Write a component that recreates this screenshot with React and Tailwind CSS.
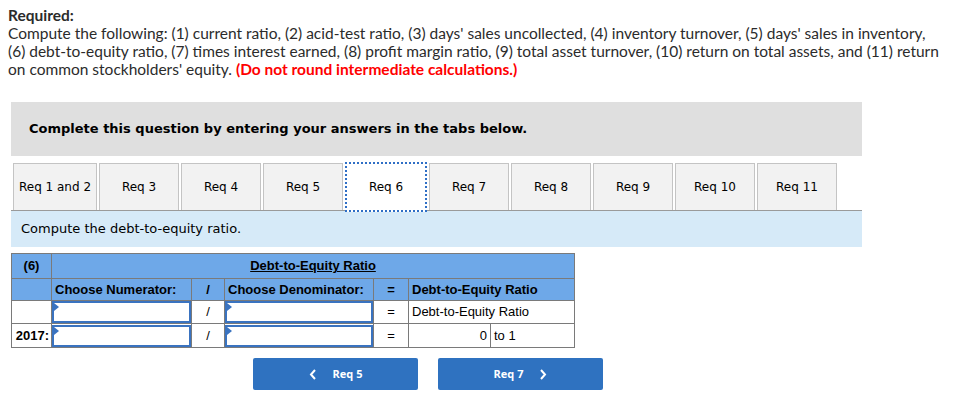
import React from 'react';

const tabs = ['Req 1 and 2', 'Req 3', 'Req 4', 'Req 5', 'Req 6', 'Req 7', 'Req 8', 'Req 9', 'Req 10', 'Req 11'];

const AnswerBox = () => (
    <div className="relative h-[22px] border-2 border-[#3a73c0] bg-white">
        <span className="absolute left-0 top-0 w-0 h-0 border-t-[4px] border-b-[4px] border-l-[5px] border-t-transparent border-b-transparent border-l-[#3a73c0]" />
    </div>
);

const App = () => {
    return (
        <div className="w-[957px] h-[412px] bg-white overflow-hidden">
            {/* Question text */}
            <div className="pl-2 pt-[6px] text-[15.5px] leading-[18px] text-[#2b2b2b] whitespace-nowrap" style={{ fontFamily: 'Lato, sans-serif' }}>
                <div className="font-bold">Required:</div>
                <div>Compute the following: (1) current ratio, (2) acid-test ratio, (3) days' sales uncollected, (4) inventory turnover, (5) days' sales in inventory,</div>
                <div>(6) debt-to-equity ratio, (7) times interest earned, (8) profit margin ratio, (9) total asset turnover, (10) return on total assets, and (11) return</div>
                <div>on common stockholders' equity. <span className="font-bold text-[#f00]">(Do not round intermediate calculations.)</span></div>
            </div>

            <div className="ml-[11px] w-[851px]" style={{ fontFamily: '"DejaVu Sans", Verdana, sans-serif' }}>
                <div className="mt-[24px] h-[54px] bg-[#dfdfdf] flex items-center pl-[18px] text-[13px] font-bold text-black">
                    Complete this question by entering your answers in the tabs below.
                </div>

                {/* Tabs */}
                <div className="mt-[7px] flex items-end gap-[2px] pl-[2px] border-b border-[#9a9a9a] h-[48px]">
                    {tabs.map((t, i) =>
                        i === 4 ? (
                            <div key={t} className="w-[82px] h-[50px] -mb-[2px] border-2 border-dotted border-[#2f6fc6] bg-white flex items-center justify-center text-[12px] text-black relative z-10">
                                {t}
                            </div>
                        ) : (
                            <div key={t} className={`${i === 0 ? 'w-[84px]' : 'w-[80px]'} h-[47px] border border-b-0 border-[#c4c4c4] bg-[#f2f2f2] flex items-center justify-center text-[12px] text-black`}>
                                {t}
                            </div>
                        )
                    )}
                </div>

                <div className="h-[36px] bg-[#d6eaf8] flex items-center pl-[10px] text-[13px] text-black">
                    Compute the debt-to-equity ratio.
                </div>

                {/* Ratio table */}
                <table className="mt-[6px] border-collapse text-[13px] text-black" style={{ fontFamily: '"Liberation Sans", Arial, sans-serif' }}>
                    <tbody>
                        <tr className="h-[25px] bg-[#6ea8e8]">
                            <td className="w-[40px] border border-[#7a7a7a] text-center font-bold">(6)</td>
                            <td colSpan={6} className="border border-[#7a7a7a] text-center font-bold underline">Debt-to-Equity Ratio</td>
                        </tr>
                        <tr className="h-[22px] bg-[#6ea8e8] font-bold">
                            <td className="border border-[#7a7a7a]"></td>
                            <td className="w-[140px] border border-[#7a7a7a] pl-[3px]">Choose Numerator:</td>
                            <td className="w-[33px] border border-[#7a7a7a] text-center">/</td>
                            <td className="w-[149px] border border-[#7a7a7a] pl-[3px]">Choose Denominator:</td>
                            <td className="w-[35px] border border-[#7a7a7a] text-center">=</td>
                            <td colSpan={2} className="border border-[#7a7a7a] pl-[3px]">Debt-to-Equity Ratio</td>
                        </tr>
                        <tr className="h-[23px] bg-white">
                            <td className="border border-[#7a7a7a]"></td>
                            <td className="border border-[#7a7a7a] p-0"><AnswerBox /></td>
                            <td className="border border-[#7a7a7a] text-center">/</td>
                            <td className="border border-[#7a7a7a] p-0"><AnswerBox /></td>
                            <td className="border border-[#7a7a7a] text-center">=</td>
                            <td colSpan={2} className="border border-[#7a7a7a] pl-[3px]">Debt-to-Equity Ratio</td>
                        </tr>
                        <tr className="h-[24px] bg-white">
                            <td className="border border-[#7a7a7a] text-right pr-[2px] font-bold">2017:</td>
                            <td className="border border-[#7a7a7a] p-0"><AnswerBox /></td>
                            <td className="border border-[#7a7a7a] text-center">/</td>
                            <td className="border border-[#7a7a7a] p-0"><AnswerBox /></td>
                            <td className="border border-[#7a7a7a] text-center">=</td>
                            <td className="w-[82px] border border-[#7a7a7a] text-right pr-[3px]">0</td>
                            <td className="w-[84px] border border-[#7a7a7a] pl-[3px]">to 1</td>
                        </tr>
                    </tbody>
                </table>
            </div>

            {/* Navigation */}
            <div className="mt-[10px] ml-[253px] flex gap-[20px] text-[11px] font-bold text-white" style={{ fontFamily: '"Open Sans", sans-serif' }}>
                <button className="w-[165px] h-[32px] rounded-[2px] bg-[#2f72c0] flex items-center justify-center gap-[16px]">
                    <svg width="8" height="11" viewBox="0 0 8 11" fill="none" stroke="white" strokeWidth="2"><path d="M6 1 L2 5.5 L6 10" /></svg>
                    <span>Req 5</span>
                </button>
                <button className="w-[165px] h-[32px] rounded-[2px] bg-[#2f72c0] flex items-center justify-center gap-[16px]">
                    <span>Req 7</span>
                    <svg width="8" height="11" viewBox="0 0 8 11" fill="none" stroke="white" strokeWidth="2"><path d="M2 1 L6 5.5 L2 10" /></svg>
                </button>
            </div>
        </div>
    );
};

export default App;
